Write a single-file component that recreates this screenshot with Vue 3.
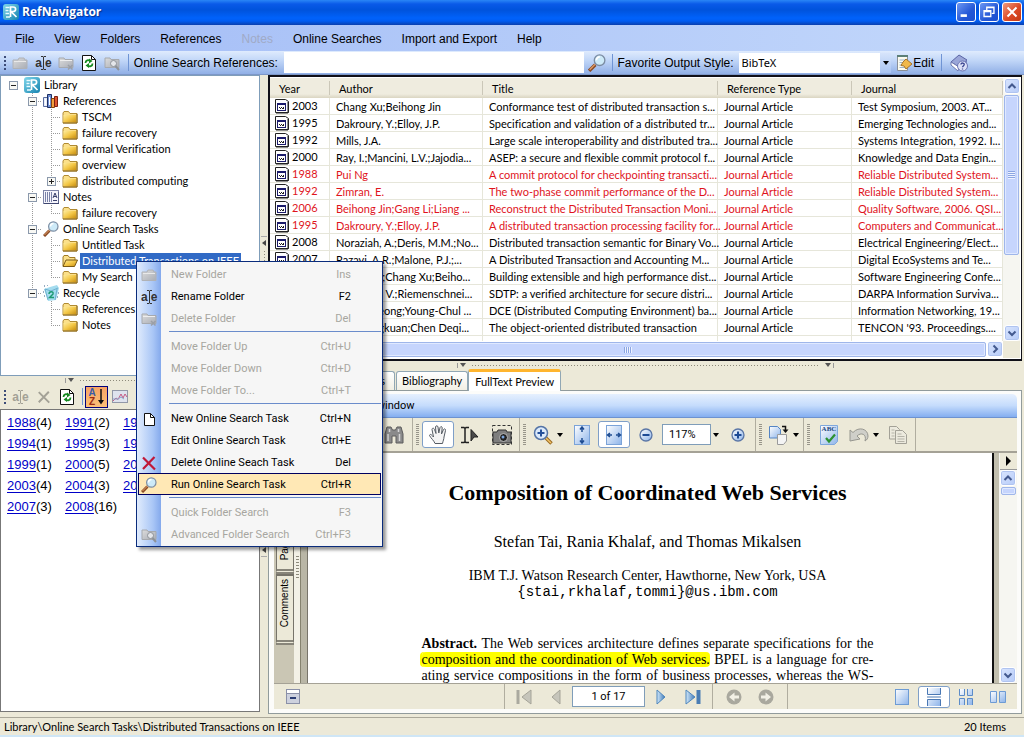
<script setup>
import { ref } from 'vue'

const menus = [
  { label: 'File' }, { label: 'View' }, { label: 'Folders' }, { label: 'References' },
  { label: 'Notes', off: true }, { label: 'Online Searches' }, { label: 'Import and Export' }, { label: 'Help' }
]

const query = ref('')
const style = ref('BibTeX')
const zoom = ref('117%')
const page = ref('1 of 17')

// cells: '' blank, 'v' vertical line, 't' tee, 'l' corner; box: expander sign
const tree = [
  { cells: [''], box: '−', icon: 'logo', label: 'Library' },
  { cells: ['', 't'], box: '−', icon: 'books', label: 'References' },
  { cells: ['', 'v', 't'], icon: 'folder', label: 'TSCM' },
  { cells: ['', 'v', 't'], icon: 'folder', label: 'failure recovery' },
  { cells: ['', 'v', 't'], icon: 'folder', label: 'formal Verification' },
  { cells: ['', 'v', 't'], icon: 'folder', label: 'overview' },
  { cells: ['', 'v', 'l'], box: '+', icon: 'folder', label: 'distributed computing' },
  { cells: ['', 't'], box: '−', icon: 'notes', label: 'Notes' },
  { cells: ['', 'v', 'l'], icon: 'folder', label: 'failure recovery' },
  { cells: ['', 't'], box: '−', icon: 'lens', label: 'Online Search Tasks' },
  { cells: ['', 'v', 't'], icon: 'folder', label: 'Untitled Task' },
  { cells: ['', 'v', 't'], icon: 'folder-open', label: 'Distributed Transactions on IEEE', on: true },
  { cells: ['', 'v', 'l'], icon: 'folder', label: 'My Search' },
  { cells: ['', 'l'], box: '−', icon: 'recycle', label: 'Recycle' },
  { cells: ['', '', 't'], icon: 'folder', label: 'References' },
  { cells: ['', '', 'l'], icon: 'folder', label: 'Notes' }
]

const years = [
  ['1988', 4], ['1991', 2], ['1992', 4],
  ['1994', 1], ['1995', 3], ['1996', 2],
  ['1999', 1], ['2000', 5], ['2001', 2],
  ['2003', 4], ['2004', 3], ['2005', 5],
  ['2007', 3], ['2008', 16]
]

const rows = [
  ['2003', 'Chang Xu;Beihong Jin', 'Conformance test of distributed transaction s...', 'Test Symposium, 2003. AT...'],
  ['1995', 'Dakroury, Y.;Elloy, J.P.', 'Specification and validation of a distributed tr...', 'Emerging Technologies and...'],
  ['1992', 'Mills, J.A.', 'Large scale interoperability and distributed tra...', 'Systems Integration, 1992. I...'],
  ['2000', 'Ray, I.;Mancini, L.V.;Jajodia...', 'ASEP: a secure and flexible commit protocol f...', 'Knowledge and Data Engin...'],
  ['1988', 'Pui Ng', 'A commit protocol for checkpointing transacti...', 'Reliable Distributed System...', true],
  ['1992', 'Zimran, E.', 'The two-phase commit performance of the D...', 'Reliable Distributed System...', true],
  ['2006', 'Beihong Jin;Gang Li;Liang ...', 'Reconstruct the Distributed Transaction Moni...', 'Quality Software, 2006. QSI...', true],
  ['1995', 'Dakroury, Y.;Elloy, J.P.', 'A distributed transaction processing facility for...', 'Computers and Communicat...', true],
  ['2008', 'Noraziah, A.;Deris, M.M.;No...', 'Distributed transaction semantic for Binary Vo...', 'Electrical Engineering/Elect...'],
  ['2007', 'Razavi, A.R.;Malone, P.J.;...', 'A Distributed Transaction and Accounting M...', 'Digital EcoSystems and Te...'],
  ['2003', 'Wei Zhan;Chang Xu;Beiho...', 'Building extensible and high performance dist...', 'Software Engineering Confe...'],
  ['2000', 'Gilham, F. V.;Riemenschnei...', 'SDTP: a verified architecture for secure distri...', 'DARPA Information Surviva...'],
  ['1998', 'Eun-Mi Jeong;Young-Chul ...', 'DCE (Distributed Computing Environment) ba...', 'Information Networking, 19...'],
  ['1993', 'Zhou Lingkuan;Chen Deqi...', 'The object-oriented distributed transaction', "TENCON '93. Proceedings...."]
]

const contextMenu = [
  { label: 'New Folder', key: 'Ins', off: true, icon: 'folder-off' },
  { label: 'Rename Folder', key: 'F2', icon: 'rename' },
  { label: 'Delete Folder', key: 'Del', off: true, icon: 'folder-del' },
  null,
  { label: 'Move Folder Up', key: 'Ctrl+U', off: true },
  { label: 'Move Folder Down', key: 'Ctrl+D', off: true },
  { label: 'Move Folder To...', key: 'Ctrl+T', off: true },
  null,
  { label: 'New Online Search Task', key: 'Ctrl+N', icon: 'sheet' },
  { label: 'Edit Online Search Task', key: 'Ctrl+E' },
  { label: 'Delete Online Seach Task', key: 'Del', icon: 'cross' },
  { label: 'Run Online Search Task', key: 'Ctrl+R', icon: 'lens', on: true },
  null,
  { label: 'Quick Folder Search', key: 'F3', off: true },
  { label: 'Advanced Folder Search', key: 'Ctrl+F3', off: true, icon: 'folder-find' }
]
</script>

<template>
  <div class="app">
    <svg class="defs" aria-hidden="true">
      <defs>
        <linearGradient id="gFolder" x1="0" y1="0" x2="1" y2="1"><stop offset="0" stop-color="#fdeb9c" /><stop offset=".5" stop-color="#f3c747" /><stop offset="1" stop-color="#c68d10" /></linearGradient>
        <linearGradient id="gGrey" x1="0" y1="0" x2="1" y2="1"><stop offset="0" stop-color="#dcdcdc" /><stop offset="1" stop-color="#a9adb5" /></linearGradient>
        <linearGradient id="gBlue" x1="0" y1="0" x2="1" y2="1"><stop offset="0" stop-color="#ffffff" /><stop offset="1" stop-color="#8db4ea" /></linearGradient>
        <linearGradient id="gNav" x1="0" y1="0" x2="1" y2="0"><stop offset="0" stop-color="#d3e9fa" /><stop offset="1" stop-color="#3c78b8" /></linearGradient>
        <linearGradient id="gLogo" x1="0" y1="0" x2="1" y2="1"><stop offset="0" stop-color="#7fd6ea" /><stop offset="1" stop-color="#1583b0" /></linearGradient>
      </defs>
      <symbol id="logo" viewBox="0 0 16 16"><rect width="16" height="16" rx="3" fill="url(#gLogo)" /><path d="M2.500 3.500h4M2.500 6.500h3M2.500 9.500h3.500M3 13h4" fill="none" stroke="#e9fbff" stroke-width="1.300" /><path d="M7.500 13V3H10c3.500 0 3.500 4.500 0 4.500H8l5.500 5.500" fill="none" stroke="#fff" stroke-width="1.700" /></symbol>
      <symbol id="folder" viewBox="0 0 16 16"><path d="M1 13V4l1-1.500h4.500L8 4.500h7V14H1z" fill="#fbe08a" stroke="#b08a32" /><path d="M1.500 6H14v7.500H1.500z" fill="url(#gFolder)" /><path d="M1 14h14V5" fill="none" stroke="#8a6820" /></symbol>
      <symbol id="folder-open" viewBox="0 0 16 16"><path d="M1 13V4l1-1.500h4L7.500 4.500H13V7" fill="#fbe08a" stroke="#a07a22" /><path d="M1 13.500 4 7h11.500l-3 6.500z" fill="url(#gFolder)" stroke="#7b5a14" /></symbol>
      <symbol id="folder-off" viewBox="0 0 16 16"><path d="M1 13.500V5h5l1-2h5l1 2h2v8.500z" fill="url(#gGrey)" stroke="#b0b2b6" /><path d="M2 6.500h12" stroke="#e9e9e9" /></symbol>
      <symbol id="folder-del" viewBox="0 0 16 16"><path d="M1 12.500V3h5l1 1.500h8v8z" fill="url(#gGrey)" stroke="#a6a9ae" /><path d="M2 5.500h12" stroke="#eee" /><path d="m10 10 4.500 4.500m0-4.500L10 14.500" stroke="#9b9fa6" stroke-width="1.500" /></symbol>
      <symbol id="folder-find" viewBox="0 0 16 16"><path d="M1 12.500V3h5l1 1.500h8v8z" fill="url(#gGrey)" stroke="#a6a9ae" /><circle cx="9.500" cy="8.500" r="3" fill="#e4e6ea" stroke="#8e9298" /><path d="m11.500 11 3.500 4" stroke="#8e9298" stroke-width="2" /></symbol>
      <symbol id="refresh" viewBox="0 0 16 16"><path d="M1.500.5h9l4 4v11h-13z" fill="#fff" stroke="#111" /><path d="M10.500.5v4h4" fill="none" stroke="#111" /><path d="M4.500 8c0-3 3-3.500 4.500-2M11.500 8.500c0 3-3 3.500-4.500 2" fill="none" stroke="#158a20" stroke-width="1.800" /><path d="M8 3.500 11.500 6 8 8.500zM8 8l-3.500 2.500L8 13z" fill="#158a20" /></symbol>
      <symbol id="lens" viewBox="0 0 16 16"><path d="m1 15 5.500-5.500" stroke="#8a4b25" stroke-width="3" /><path d="m1.500 14 5-5" stroke="#e6a06a" stroke-width="1" /><circle cx="10.300" cy="5.500" r="4.700" fill="#cdeaf8" stroke="#7c8da3" stroke-width="1.200" /><path d="M7.500 5.500A3 3 0 0 1 10.500 2.500" stroke="#fff" stroke-width="1.500" fill="none" /></symbol>
      <symbol id="books" viewBox="0 0 16 16"><path d="M.5 4.500h4v9h-4z" fill="#e8edf8" stroke="#5a6da0" /><path d="M4.500 1.500h4v13h-4z" fill="#6f8fd4" stroke="#1d2f63" /><path d="M8.500 5.500h3v9h-3z" fill="#f0a040" stroke="#84430e" /><path d="M11.500 3.500h3v10h-3z" fill="#e0552e" stroke="#7f2010" /><path d="M2.500 6v6M6.500 4v8" stroke="#fff" /></symbol>
      <symbol id="notes" viewBox="0 0 16 16"><rect x=".5" y="1.500" width="15" height="13" fill="#f4f4fb" stroke="#7d84a8" /><path d="M2.500 3v10M4.500 3v10M6.500 3v10M8.500 3v10" stroke="#7a82a8" /><path d="m10 9 2-5 2 5M10.500 7.500h3M10 11.500h4" stroke="#39406b" fill="none" /><path d="M1 14.500h15V3" stroke="#3e4670" fill="none" /></symbol>
      <symbol id="recycle" viewBox="0 0 16 16"><path d="m1 4 6-2 7-2 2 3-3 12-8 1z" fill="#a4dcef" /><path d="m2 4 3 11M14 4l-2 11M2 4l6 2 7-3" stroke="#6fb0cf" fill="none" /><path d="M6 9c0-3 5-3 4 0L6.500 12.500H11" fill="none" stroke="#1d9a72" stroke-width="1.400" /><path d="M1 1h1M4 0h1M0 7h1M1 11h1M14 12h1M15 8h1" stroke="#2f5a86" /></symbol>
      <symbol id="sheet" viewBox="0 0 16 16"><path d="M3.500 2.500h6l4 4v8h-10z" fill="#fff" stroke="#111" /><path d="M9.500 2.500v4h4" fill="none" stroke="#111" /></symbol>
      <symbol id="cross" viewBox="0 0 16 16"><path d="m2 2.500 12 12M13.500 2 2 14" stroke="currentColor" stroke-width="2.200" fill="none" /></symbol>
      <symbol id="beam" viewBox="0 0 5 16"><path d="M0 1.500h2l.5.500.5-.5h2M2.500 2v12M0 14.500h2l.5-.5.5.500h2" fill="none" stroke="currentColor" /></symbol>
      <symbol id="down" viewBox="0 0 8 18"><path d="M4 1v13" stroke="#111" stroke-width="1.500" /><path d="M1 12h6L4 16.500z" fill="#111" /></symbol>
      <symbol id="chart" viewBox="0 0 16 14"><rect x=".5" y=".5" width="15" height="12" fill="#dfe3ee" stroke="#9298a8" /><path d="M1 11l3-3 2 1.500L9 4l2 4 2-4 2 3" stroke="#c55a82" fill="none" /><path d="M1 9h5l3-2 3 2" stroke="#8aa5cb" fill="none" /></symbol>
      <symbol id="record" viewBox="0 0 14 16"><path d="M.5 1.500h10l3 2v11H.5z" fill="#fff" stroke="#222" /><path d="M13 4v11H1" fill="none" stroke="#222" /><rect x="2.500" y="5.500" width="8" height="7" fill="#fff" stroke="#1b1b6b" /><path d="M2 6h9" stroke="#1b1b6b" stroke-width="2" /><path d="M4 9.500h1M6 9.500h1M8 9.500h1M5 10.500h1M7 10.500h2" stroke="#222" /></symbol>
      <symbol id="edit" viewBox="0 0 18 18"><path d="M2.500 2.500h10v14h-10z" fill="#fbfbef" stroke="#8b9097" /><path d="M2 1h11v2H2z" fill="#5c7f77" /><path d="M4.500 6h6M4.500 8.500h5M4.500 11h4M4.500 13.500h6" stroke="#9fb3c9" /><path d="m11 5 6 5-6 5-2-3-3-.5 2-3.500z" fill="#f0b84a" stroke="#a8762a" /></symbol>
      <symbol id="help" viewBox="0 0 18 18"><path d="M1 8 9 1l8 5-8 7z" fill="#9aa6d8" stroke="#5a64a4" /><path d="M1 8v3l7 6 1-4z" fill="#fff" stroke="#6e78b0" /><path d="M9 13v3l8-6V6z" fill="#7480bd" /><circle cx="12.500" cy="12" r="5" fill="#dbe0f7" stroke="#6c76b4" /><path d="M11 10.500c0-2 3.500-2 3.200.2C14 12 12.500 12 12.500 13.300M12.500 14.500v1" stroke="#38438f" stroke-width="1.300" fill="none" /></symbol>
      <symbol id="binoculars" viewBox="0 0 20 20"><path d="M1 18V9l2-7h4l1.500 3h3L13 2h4l2 7v9h-7v-7H8v7z" fill="#8a8a8a" stroke="#5c5c5c" /><path d="M4 9v7M15.500 9v7M5.500 4v3M14.500 4v3" stroke="#d5d5d5" stroke-width="1.500" /></symbol>
      <symbol id="hand" viewBox="0 0 20 20"><path d="M7 18.500c-1-3-4-5-5.500-8 .5-2 2-1 4 1.500L4 4.500c.3-2 2-1.500 2.500 0L8 8.500 7.500 2c.5-1.800 2.200-1.500 2.500 0l.8 6L12 2.500c.8-1.500 2.300-1 2.200.5L13.500 9l2-4.500c1-1.300 2.300-.5 2 1L16 12c0 2-1 4-1.500 6.500z" fill="#f4f4f4" stroke="#555b63" /></symbol>
      <symbol id="select-text" viewBox="0 0 20 20"><path d="M1 2.500h3l1 1 1-1h3M5 3v14M1 17.500h3l1-1 1 1h3" fill="none" stroke="#222" stroke-width="1.500" /><path d="M11 4.500 18 12h-4l-3 4z" fill="#4a4a4a" stroke="#222" /></symbol>
      <symbol id="camera" viewBox="0 0 20 20"><rect x=".5" y=".5" width="19" height="19" fill="none" stroke="#333" stroke-dasharray="3 2" /><path d="M1 7h4l1-2h8l1 2h4v11H1z" fill="#7e7e7e" stroke="#333" /><circle cx="11.500" cy="12.500" r="4" fill="#222" stroke="#bbb" /><circle cx="11" cy="12" r="1.500" fill="#7aa5dd" /></symbol>
      <symbol id="zoom-in" viewBox="0 0 20 20"><path d="m12.500 12.500 6 6" stroke="#9a6a20" stroke-width="3.500" /><path d="m12 12 6 6" stroke="#f2c46a" stroke-width="1.500" /><circle cx="8" cy="8" r="6.500" fill="#dceafa" stroke="#5474a6" stroke-width="1.500" /><path d="M8 4.500v7M4.500 8h7" stroke="#24509a" stroke-width="2" /></symbol>
      <symbol id="fit-height" viewBox="0 0 16 20"><rect x=".5" y=".5" width="15" height="19" fill="url(#gBlue)" stroke="#7ba3d8" /><path d="M8 2v5M8 13v5M6 4.500 8 2l2 2.500M6 15.500 8 18l2-2.500" fill="none" stroke="#1e4c91" stroke-width="1.500" /></symbol>
      <symbol id="fit-width" viewBox="0 0 16 20"><rect x=".5" y=".5" width="15" height="19" fill="url(#gBlue)" stroke="#7ba3d8" /><path d="M1.500 10H6M10 10h4.500M4 8l-2.500 2L4 12M12 8l2.500 2L12 12" fill="none" stroke="#1e4c91" stroke-width="1.500" /></symbol>
      <symbol id="minus" viewBox="0 0 14 14"><circle cx="7" cy="7" r="6" fill="url(#gBlue)" stroke="#5a76a6" stroke-width="1.300" /><path d="M3.500 7h7" stroke="#1c4a95" stroke-width="2" /></symbol>
      <symbol id="plus" viewBox="0 0 14 14"><circle cx="7" cy="7" r="6" fill="url(#gBlue)" stroke="#5a76a6" stroke-width="1.300" /><path d="M3.500 7h7M7 3.500v7" stroke="#1c4a95" stroke-width="2" /></symbol>
      <symbol id="rotate" viewBox="0 0 20 20"><path d="M.5 1.500h8l3 3V13H.5z" fill="url(#gBlue)" stroke="#5585c4" /><path d="M8.500 9.500h9V16l-3 3.500h-6z" fill="#f4f4f4" stroke="#9a9a9a" /><path d="M13 1.500h3.500V5" fill="none" stroke="#111" stroke-width="1.500" /><path d="M13.500 4.500h6l-3 3.500z" fill="#111" /></symbol>
      <symbol id="spell" viewBox="0 0 18 20"><path d="M.5.500h17v16l-3 3H.5z" fill="url(#gBlue)" stroke="#7fa8dc" /><path d="m6 13 3 3.500 6-7" fill="none" stroke="#2c9132" stroke-width="2.200" /></symbol>
      <symbol id="undo" viewBox="0 0 20 16"><path d="M1 14V3l3 2.500C10-1 19 2 19 9c0 2-1 4-3 5 2-7-4-9-8-5l3 3z" fill="#cfcfc9" stroke="#96968f" /></symbol>
      <symbol id="copy" viewBox="0 0 18 18"><path d="M.5.500h7l3 3V13H.5z" fill="#eceade" stroke="#a3a197" /><path d="M6.500 4.500h7l4 4v9h-11z" fill="#eceade" stroke="#a3a197" /><path d="M8.500 8h4M8.500 10.500h7M8.500 13h7M8.500 15.500h7M2.500 4h3M2.500 7h3M2.500 10h3" stroke="#b5b3a8" /></symbol>
      <symbol id="first" viewBox="0 0 16 16"><path d="M.5 1h3v14h-3z" fill="#aaa99f" /><path d="M15 1v14L6 8z" fill="#c6c5bb" stroke="#a5a498" /></symbol>
      <symbol id="prev" viewBox="0 0 10 16"><path d="M9 1v14L1 8z" fill="#c6c5bb" stroke="#a5a498" /></symbol>
      <symbol id="next" viewBox="0 0 10 16"><path d="M1 1v14l8-7z" fill="url(#gNav)" stroke="#4e86bd" /></symbol>
      <symbol id="last" viewBox="0 0 16 16"><path d="M1 1v14l9-7z" fill="url(#gNav)" stroke="#4e86bd" /><path d="M11.500 1h4v14h-4z" fill="#4a7db4" /></symbol>
      <symbol id="back" viewBox="0 0 16 16"><circle cx="8" cy="8" r="7.500" fill="#a9a89e" /><path d="M13 6.500H8.500V3.500L3 8l5.500 4.500v-3H13z" fill="#f2f0e6" /></symbol>
      <symbol id="one" viewBox="0 0 14 16"><rect x=".5" y=".5" width="13" height="15" fill="url(#gBlue)" stroke="#6d9bd4" /></symbol>
      <symbol id="cont" viewBox="0 0 14 18"><path d="M.5 0v6.500h13V0M.5 18v-6.500h13V18" fill="url(#gBlue)" stroke="#4a78b4" /><path d="M0 9h14" stroke="#4a78b4" /></symbol>
      <symbol id="grid" viewBox="0 0 14 16"><path d="M.5 0v6.500h5V0M8.500 0v6.500h5V0M.5 16V9.500h5V16M8.500 16V9.500h5V16" fill="url(#gBlue)" stroke="#5c8cc8" /></symbol>
      <symbol id="two" viewBox="0 0 16 12"><path d="M.5.500h6v11h-6zM9.500.500h6v11h-6z" fill="url(#gBlue)" stroke="#6d9bd4" /></symbol>
      <symbol id="collapse" viewBox="0 0 14 15"><rect x=".5" y=".5" width="13" height="14" fill="#fff" stroke="#8a90a8" /><path d="M1 5h12v9H1z" fill="#cdd1de" /><path d="M4 9h6" stroke="#2c3e74" stroke-width="2" /><path d="M1 4.500h12" stroke="#8a90a8" /></symbol>
      <symbol id="chev-up" viewBox="0 0 10 10"><path d="M1.500 7 5 3.500 8.500 7" fill="none" stroke="#43598e" stroke-width="2" /></symbol>
      <symbol id="chev-down" viewBox="0 0 10 10"><path d="M1.500 3.500 5 7l3.500-3.500" fill="none" stroke="#43598e" stroke-width="2" /></symbol>
      <symbol id="chev-right" viewBox="0 0 10 10"><path d="M3.500 1.500 7 5 3.500 8.500" fill="none" stroke="#43598e" stroke-width="2" /></symbol>
      <symbol id="caret" viewBox="0 0 6 4"><path d="M0 0h6L3 4z" fill="currentColor" /></symbol>
    </svg>

    <header class="titlebar">
      <svg class="i16"><use href="#logo" /></svg>
      <h1>RefNavigator</h1>
      <button class="win" aria-label="Minimize"><svg viewBox="0 0 20 20"><path d="M4 14h7" stroke="#fff" stroke-width="3" /></svg></button>
      <button class="win" aria-label="Restore"><svg viewBox="0 0 20 20"><path d="M7.500 8V4.500h8v7H13M7 5h9" fill="none" stroke="#fff" stroke-width="1.500" /><path d="M4.500 8.500h7.500v6.500H4.500zM4 9.500h8" fill="none" stroke="#fff" stroke-width="1.500" /></svg></button>
      <button class="win close" aria-label="Close"><svg viewBox="0 0 20 20"><path d="m5 5 10 10M15 5 5 15" stroke="#fff" stroke-width="2.200" /></svg></button>
    </header>

    <nav class="menubar">
      <button v-for="m in menus" :key="m.label" :disabled="m.off">{{ m.label }}</button>
    </nav>

    <div class="toolbar">
      <span class="grip"></span>
      <button class="tool" disabled aria-label="New folder"><svg class="i16"><use href="#folder-off" /></svg></button>
      <button class="tool rename" aria-label="Rename">a<svg class="beam"><use href="#beam" /></svg>e</button>
      <button class="tool" disabled aria-label="Delete folder"><svg class="i16"><use href="#folder-del" /></svg></button>
      <button class="tool" aria-label="Refresh"><svg class="i16"><use href="#refresh" /></svg></button>
      <button class="tool" disabled aria-label="Find folder"><svg class="i16"><use href="#folder-find" /></svg></button>
      <span class="vsep"></span>
      <label for="query">Online Search References:</label>
      <input id="query" v-model="query" type="text" />
      <button class="go" aria-label="Search"><svg class="i18"><use href="#lens" /></svg></button>
      <span class="vsep"></span>
      <label for="style" class="style-label">Favorite Output Style:</label>
      <span class="combo">
        <select id="style" v-model="style"><option>BibTeX</option></select>
        <span class="drop"><svg class="caret"><use href="#caret" /></svg></span>
      </span>
      <button class="edit"><svg class="i18"><use href="#edit" /></svg>Edit</button>
      <span class="vsep"></span>
      <button class="tool" aria-label="Help"><svg class="i18"><use href="#help" /></svg></button>
    </div>

    <main class="main">
      <aside class="left">
        <section class="tree">
          <div v-for="(n, i) in tree" :key="i" class="node">
            <span v-for="(c, j) in n.cells" :key="j" class="cell" :class="c && 'c-' + c">
              <button v-if="n.box && j === n.cells.length - 1" class="box" :class="{ shut: n.box === '+' }" :aria-label="n.label"></button>
            </span>
            <svg class="i16"><use :href="'#' + n.icon" /></svg>
            <span class="name" :class="{ on: n.on }">{{ n.label }}</span>
          </div>
        </section>
        <div class="hsplit"><span class="handle"><svg class="caret"><use href="#caret" /></svg><i></i></span></div>
        <div class="yearbar">
          <span class="grip"></span>
          <button class="tool rename" disabled aria-label="Rename">a<svg class="beam"><use href="#beam" /></svg>e</button>
          <button class="tool grey" disabled aria-label="Delete"><svg class="i14"><use href="#cross" /></svg></button>
          <button class="tool" aria-label="Refresh"><svg class="i16"><use href="#refresh" /></svg></button>
          <span class="vsep"></span>
          <button class="sort" aria-label="Sort"><span class="az"><span>A</span><span>Z</span></span><svg class="down"><use href="#down" /></svg></button>
          <button class="tool" aria-label="Chart"><svg class="i16"><use href="#chart" /></svg></button>
        </div>
        <section class="years">
          <span v-for="y in years" :key="y[0]"><a href="#">{{ y[0] }}</a>({{ y[1] }})</span>
        </section>
      </aside>

      <div class="vsplit"><span class="handle"><b class="tri"></b><i></i><b class="tri"></b></span></div>

      <div class="right">
        <section class="refs">
          <div class="refs-body">
            <div class="grid-wrap">
              <table>
                <colgroup><col class="w-year" /><col class="w-author" /><col class="w-title" /><col class="w-type" /><col /></colgroup>
                <thead><tr><th>Year</th><th>Author</th><th>Title</th><th>Reference Type</th><th>Journal</th></tr></thead>
                <tbody>
                  <tr v-for="(r, i) in rows" :key="i" :class="{ red: r[4] }">
                    <td class="first"><span class="yr"><svg class="rec"><use href="#record" /></svg>{{ r[0] }}</span></td><td>{{ r[1] }}</td><td>{{ r[2] }}</td><td>Journal Article</td><td>{{ r[3] }}</td>
                  </tr>
                  <tr class="rest"><td></td><td></td><td></td><td></td><td></td></tr>
                </tbody>
              </table>
            </div>
            <div class="vbar">
              <button class="sb" aria-label="Scroll up"><svg class="i10"><use href="#chev-up" /></svg></button>
              <div class="thumb tall"><i></i></div>
              <button class="sb end" aria-label="Scroll down"><svg class="i10"><use href="#chev-down" /></svg></button>
            </div>
          </div>
          <div class="hbar">
            <div class="thumb wide"><i></i></div>
            <button class="sb" aria-label="Scroll right"><svg class="i10"><use href="#chev-right" /></svg></button>
            <span class="corner"></span>
          </div>
        </section>

        <div class="hsplit"><span class="handle"><svg class="caret"><use href="#caret" /></svg><i></i><svg class="caret"><use href="#caret" /></svg></span></div>

        <div class="tabs">
          <button class="t-first">Notes</button><button>Bibliography</button><button class="active">FullText Preview</button>
        </div>

        <section class="viewer">
          <div class="banner">Open in new window</div>
          <div class="pdfbar">
            <div class="seg s-find"><svg class="i20"><use href="#binoculars" /></svg></div>
            <div class="seg">
              <span class="dots"></span>
              <button class="pt pressed" aria-label="Hand"><svg class="i20"><use href="#hand" /></svg></button>
              <button class="pt" aria-label="Select text"><svg class="i20"><use href="#select-text" /></svg></button>
              <button class="pt" aria-label="Snapshot"><svg class="i20"><use href="#camera" /></svg></button>
            </div>
            <div class="seg">
              <span class="dots"></span>
              <button class="pt narrow" aria-label="Zoom in tool"><svg class="i20"><use href="#zoom-in" /></svg><svg class="caret"><use href="#caret" /></svg></button>
              <button class="pt" aria-label="Fit page"><svg class="fit"><use href="#fit-height" /></svg></button>
              <button class="pt pressed" aria-label="Fit width"><svg class="fit"><use href="#fit-width" /></svg></button>
              <button class="pt" aria-label="Zoom out"><svg class="i14"><use href="#minus" /></svg></button>
              <input v-model="zoom" class="zoom" aria-label="Zoom" /><svg class="caret zc"><use href="#caret" /></svg>
              <button class="pt" aria-label="Zoom in"><svg class="i14"><use href="#plus" /></svg></button>
            </div>
            <div class="seg">
              <span class="dots"></span>
              <button class="pt narrow" aria-label="Rotate"><svg class="i20"><use href="#rotate" /></svg><svg class="caret"><use href="#caret" /></svg></button>
            </div>
            <div class="seg">
              <span class="dots"></span>
              <button class="pt spellbtn" aria-label="Spell check"><svg class="spell"><use href="#spell" /></svg><span class="abc">ABC</span></button>
              <button class="pt narrow" aria-label="Undo"><svg class="i20"><use href="#undo" /></svg><svg class="caret"><use href="#caret" /></svg></button>
              <button class="pt" aria-label="Copy"><svg class="i18"><use href="#copy" /></svg></button>
            </div>
          </div>
          <div class="reader">
            <div class="side">
              <button class="stab short"><span>Pages</span></button>
              <button class="stab"><span>Comments</span></button>
            </div>
            <div class="sidesplit"><i></i></div>
            <div class="gutter"></div>
            <article class="page">
              <h2>Composition of Coordinated Web Services</h2>
              <p class="authors">Stefan Tai, Rania Khalaf, and Thomas Mikalsen</p>
              <p class="place">IBM T.J. Watson Research Center, Hawthorne, New York, USA</p>
              <p class="mail">{stai,rkhalaf,tommi}@us.ibm.com</p>
              <div class="abstract">
                <p><strong>Abstract.</strong> The Web services architecture defines separate specifications for the</p>
                <p><mark>composition and the coordination of Web services.</mark> BPEL is a language for cre-</p>
                <p>ating service compositions in the form of business processes, whereas the WS-</p>
              </div>
            </article>
            <div class="gutter thin"></div>
            <div class="vbar pv">
              <button class="pop" aria-label="Expand"><b></b></button>
              <button class="sb" aria-label="Scroll up"><svg class="i10"><use href="#chev-up" /></svg></button>
              <div class="thumb tiny"></div>
              <button class="sb end" aria-label="Scroll down"><svg class="i10"><use href="#chev-down" /></svg></button>
            </div>
          </div>
          <div class="pagebar">
            <button class="nb lead" aria-label="Collapse"><svg class="coll"><use href="#collapse" /></svg></button>
            <div class="pager">
              <button class="nb" aria-label="First page"><svg class="i16"><use href="#first" /></svg></button>
              <button class="nb" aria-label="Previous page"><svg class="arr"><use href="#prev" /></svg></button>
              <input v-model="page" class="pageno" aria-label="Page" />
              <button class="nb" aria-label="Next page"><svg class="arr"><use href="#next" /></svg></button>
              <button class="nb" aria-label="Last page"><svg class="i16"><use href="#last" /></svg></button>
            </div>
            <div class="hist">
              <button class="nb" aria-label="Previous view"><svg class="i16"><use href="#back" /></svg></button>
              <button class="nb" aria-label="Next view"><svg class="i16 flip"><use href="#back" /></svg></button>
            </div>
            <div class="modes">
              <button class="nb" aria-label="Single page"><svg class="m1"><use href="#one" /></svg></button>
              <button class="nb pressed" aria-label="Continuous"><svg class="m2"><use href="#cont" /></svg></button>
              <button class="nb" aria-label="Continuous facing"><svg class="m1"><use href="#grid" /></svg></button>
              <button class="nb" aria-label="Facing"><svg class="m3"><use href="#two" /></svg></button>
            </div>
          </div>
        </section>
      </div>
    </main>

    <footer class="status"><span>Library\Online Search Tasks\Distributed Transactions on IEEE</span><span>20 Items</span></footer>

    <div class="popup" role="menu">
      <template v-for="(m, i) in contextMenu" :key="i">
        <hr v-if="!m" />
        <button v-else role="menuitem" :disabled="m.off" :class="{ on: m.on }">
          <span class="ic">
            <span v-if="m.icon === 'rename'" class="rename">a<svg class="beam"><use href="#beam" /></svg>e</span>
            <svg v-else-if="m.icon" class="i16" :class="m.icon"><use :href="'#' + m.icon" /></svg>
          </span>
          <span class="lb">{{ m.label }}</span><span class="ky">{{ m.key }}</span>
        </button>
      </template>
    </div>
  </div>
</template>

<style>
body { margin: 0; overflow: hidden; }
</style>

<style scoped>
* { box-sizing: border-box; }
.app { position: relative; height: 100vh; display: flex; flex-direction: column; background: #ece9d8; color: #000; font: 11px/16px Roboto, "Liberation Sans", Arial, sans-serif; font-variant-ligatures: none; overflow: hidden; }
button { font: inherit; color: inherit; background: none; border: 0; padding: 0; margin: 0; }
button, label, span { white-space: nowrap; }
input, select { font: inherit; color: inherit; border: 0; margin: 0; padding: 0; outline: 0; border-radius: 0; }
svg { display: block; flex: none; }
.defs { position: absolute; width: 0; height: 0; }
.i10 { width: 10px; height: 10px; }
.i14 { width: 14px; height: 14px; }
.i16 { width: 16px; height: 16px; }
.i18 { width: 18px; height: 18px; }
.i20 { width: 20px; height: 20px; }
.caret { width: 6px; height: 4px; }
.beam { width: 5px; height: 16px; margin: 0 -1px; }
.rename { display: flex; align-items: center; font: bold 12px/14px "Liberation Sans", sans-serif; color: #333; }
.rename:disabled { color: #a3a196; }

.titlebar { flex: none; height: 25px; display: flex; align-items: center; gap: 3px; padding: 0 2px 2px 3px; background: linear-gradient(#2a86f6 0, #0a5ae8 4px, #0053dc 10px, #0062fb 18px, #005cf2 21px, #0a3fae 25px); }
.titlebar h1 { flex: 1; margin: 0; font: bold 12px/20px "Open Sans", "Noto Sans", sans-serif; color: #fff; text-shadow: 1px 1px 1px #0a2f8c; }
.win { width: 20px; height: 20px; border: 1px solid #fff; border-radius: 3px; background: linear-gradient(135deg, #6d98f3, #2457d6 60%, #1c4fd0); }
.win.close { background: linear-gradient(135deg, #f09a7e, #dc4a26 55%, #c33a14); }
.win svg { width: 18px; height: 18px; }

.menubar, .toolbar { font-family: "Liberation Sans", Arial, sans-serif; font-size: 12px; }
.menubar { flex: none; height: 26px; display: flex; align-items: center; padding: 2px 0 0 15px; gap: 20px; background: linear-gradient(90deg, #a3bcf6, #c3d8fb); }
.menubar button:disabled { color: #a0aac6; }

.toolbar { flex: none; height: 24px; display: flex; align-items: center; background: linear-gradient(#dfebfd, #c2d7f8 40%, #90afe6); border-bottom: 1px solid #7d97c8; padding-left: 4px; }
.grip { width: 2px; height: 14px; margin-right: 3px; background: repeating-linear-gradient(#3c4c78 0 2px, transparent 2px 4px); }
.tool { width: 23px; display: flex; justify-content: center; }
.vsep { width: 1px; height: 17px; background: #6f94d4; margin: 0 5px 0 4px; }
.toolbar input { flex: 1 1 300px; min-width: 60px; height: 21px; margin-left: 6px; background: #fff; }
.go { margin: 0 2px 0 4px; }
.style-label { margin-right: 5px; }
.combo { display: grid; width: 153px; height: 20px; }
.combo > * { grid-area: 1 / 1; }
.combo select { appearance: none; background: #fff; padding-left: 3px; width: 100%; font: 11px "Noto Sans", sans-serif; }
.drop { justify-self: end; width: 11px; display: flex; align-items: center; justify-content: center; background: linear-gradient(#d6e4fb, #a9c4f2); pointer-events: none; }
.edit { display: flex; align-items: center; margin: 0 3px 0 4px; }
.toolbar .tool:last-child { margin-right: 54px; }

.main { flex: 1; min-height: 0; display: flex; }
.left { width: 260px; flex: none; display: flex; flex-direction: column; }
.tree, .refs, .status, .tabs { font-family: Lato, "Liberation Sans", sans-serif; }
.tree { flex: none; height: 301px; border: 1px solid #7f9db9; background: #fff; padding: 1px 0 0 3px; }
.node { display: flex; align-items: center; height: 16px; }
.cell { width: 19px; height: 16px; flex: none; display: flex; align-items: center; justify-content: center; --v: repeating-linear-gradient(#999 0 1px, transparent 1px 2px); --h: repeating-linear-gradient(90deg, #999 0 1px, transparent 1px 2px); background-repeat: no-repeat; }
.c-v { background-image: var(--v); background-size: 1px 16px; background-position: 9px 0; }
.c-t { background-image: var(--v), var(--h); background-size: 1px 16px, 10px 1px; background-position: 9px 0, 9px 8px; }
.c-l { background-image: var(--v), var(--h); background-size: 1px 8px, 10px 1px; background-position: 9px 0, 9px 8px; }
.box { width: 9px; height: 9px; border: 1px solid #8b99ac; background: linear-gradient(#222, #222) 1px 3px / 5px 1px no-repeat #f8f8f4; }
.box.shut { background: linear-gradient(#222, #222) 1px 3px / 5px 1px no-repeat, linear-gradient(#222, #222) 3px 1px / 1px 5px no-repeat #f8f8f4; }
.node svg { margin: 0 2px 0 1px; }
.name { padding: 0 2px; }
.name.on { background: #316ac5; color: #fff; }

.hsplit { flex: none; height: 8px; display: flex; justify-content: center; align-items: center; }
.hsplit .handle { width: 50%; display: flex; align-items: center; gap: 6px; color: #555; border: solid #999; border-width: 0 1px; padding: 0 2px; height: 5px; }
.hsplit i { flex: 1; height: 1px; background: repeating-linear-gradient(90deg, #8d8a7b 0 1px, transparent 1px 3px); }
.yearbar { flex: none; height: 25px; display: flex; align-items: center; padding-left: 4px; }
.grey { color: #a3a196; }
.sort { width: 23px; height: 22px; border: 1px solid #00007a; display: flex; align-items: center; justify-content: center; gap: 1px; background: linear-gradient(#f7a264, #fbc078); margin-left: -3px; }
.az { display: flex; flex-direction: column; font: bold 10px/9px "Liberation Sans", sans-serif; color: #3b5ba8; }
.az span + span { color: #a02c12; }
.down { width: 8px; height: 18px; }
.years { flex: 1; border: 1px solid #777; background: #fff; padding: 2px 0 0 6px; display: grid; grid-template-columns: repeat(3, 58px); grid-auto-rows: 21px; align-items: center; font-family: "Liberation Sans", Arial, sans-serif; font-size: 13px; margin: 0 0 5px; }
.years a { color: #0000c8; text-decoration: underline; text-underline-offset: 2px; }

.vsplit { width: 8px; flex: none; display: flex; align-items: center; justify-content: center; }
.vsplit .handle { height: 50%; width: 6px; display: flex; flex-direction: column; align-items: center; gap: 5px; border: solid #aaa; border-width: 1px 0; padding: 3px 0; }
.vsplit i { flex: 1; width: 1px; background: repeating-linear-gradient(#8d8a7b 0 1px, transparent 1px 3px); }
.tri { border: solid transparent; border-width: 3px 4px 3px 0; border-right-color: #444; }

.right { flex: 1; min-width: 0; display: flex; flex-direction: column; padding-right: 2px; }
.refs { flex: none; border: 2px solid #101018; border-width: 2px 1px 2px 2px; background: #fff; padding: 1px; padding-left: 0; }
.refs-body { display: flex; }
.grid-wrap { flex: 1; min-width: 0; }
table { width: 100%; border-collapse: separate; border-spacing: 0; table-layout: fixed; }
.w-year { width: 60px; }
.w-author { width: 153px; }
.w-title { width: 235px; }
.w-type { width: 134px; }
th { height: 20px; padding: 1px 0 0 9px; text-align: left; font-weight: normal; background: linear-gradient(90deg, #cbc7b8, #cbc7b8) right 3px / 1px 14px no-repeat, linear-gradient(#efecdf 80%, #dad5c1); white-space: nowrap; }
td { height: 17px; padding: 1px 0 0 6px; line-height: 15px; border-bottom: 1px solid #e6e6da; border-right: 1px solid #e6e6da; white-space: nowrap; }
td.first { padding: 0 0 0 5px; }
.yr { display: flex; align-items: center; gap: 3px; line-height: 16px; }
.rec { width: 14px; height: 16px; }
.red td { color: #e0141c; }
.rest td { height: 5px; padding: 0; border-bottom: 0; }
.vbar { width: 17px; flex: none; display: flex; flex-direction: column; align-items: center; background: #f6f6f1; }
.sb { width: 16px; height: 16px; flex: none; display: flex; align-items: center; justify-content: center; border: 1px solid #fff; border-radius: 3px; background: linear-gradient(135deg, #d9e5fe, #b6cbf8); box-shadow: inset 0 0 0 1px #b0c4f0; }
.end { margin-top: auto; }
.thumb { display: flex; align-items: center; justify-content: center; border: 1px solid #9fb6ea; border-radius: 2px; background: #c6d5fd; box-shadow: inset 0 0 0 1px #e0e9ff; }
.tall { width: 15px; height: 160px; margin-top: 1px; }
.tall i { width: 7px; height: 8px; background: repeating-linear-gradient(#8ca6e2 0 1px, #eef3ff 1px 2px); }
.hbar { display: flex; height: 17px; }
.wide { flex: 1; margin: 1px 1px 1px 0; }
.wide i { width: 8px; height: 6px; background: repeating-linear-gradient(90deg, #8ca6e2 0 1px, #eef3ff 1px 2px); }
.corner { width: 17px; background: #ece9d8; }

.tabs { flex: none; height: 21px; display: flex; align-items: flex-end; padding-left: 2px; position: relative; }
.tabs button { height: 19px; padding: 0 5px; border: 1px solid #91a7b4; border-bottom: 0; border-radius: 3px 3px 0 0; background: linear-gradient(#fff, #f1efe4); margin-right: 1px; }
.tabs .t-first { width: 125px; text-align: right; padding-right: 9px; }
.tabs .active { height: 22px; padding: 0 6px; margin: 0 0 -1px -1px; border-top: 3px solid #ffb52e; background: #fff; line-height: 14px; }

.viewer { flex: 1; min-height: 0; display: flex; flex-direction: column; border: 1px solid #919b9c; background: #fcfcfa; padding: 3px 4px 4px 5px; margin-bottom: 3px; }
.banner { flex: none; height: 24px; line-height: 24px; padding-left: 40px; border-radius: 0 5px 0 0; background: linear-gradient(#e6f0fe, #c5dcfc 50%, #84aef0); border-bottom: 1px solid #6d92d0; }
.pdfbar { flex: none; height: 35px; display: flex; background: #ece9d8; border-bottom: 2px solid #a5a296; }
.seg { display: flex; align-items: center; border-right: 1px solid #b0ad9f; padding-right: 1px; }
.s-find { width: 139px; justify-content: flex-end; padding-right: 8px; }
.dots { width: 3px; height: 22px; margin: 0 3px; background: repeating-linear-gradient(#98958a 0 1px, transparent 1px 2px); }
.pt { width: 32px; height: 27px; display: flex; align-items: center; justify-content: center; gap: 4px; }
.narrow { width: 37px; }
.pressed { border: 1px solid #7f9fc8; border-radius: 3px; background: #fff; }
.fit { width: 16px; height: 20px; }
.spellbtn { position: relative; }
.spell { width: 18px; height: 20px; }
.abc { position: absolute; inset: 3px 0 auto; text-align: center; font: bold 7px/10px "Liberation Serif", serif; color: #24487e; }
.zoom { width: 49px; height: 21px; border: 1px solid #7f9db9; background: #fff; padding-left: 6px; }
.zc { margin: 0 3px 0 2px; }

.reader { flex: 1; min-height: 0; display: flex; background: #ece9d8; }
.side { width: 20px; display: flex; flex-direction: column; background: #cac6b4; padding-left: 2px; padding-top: 63px; }
.stab { height: 71px; flex: none; border: 1px solid #77746a; border-top-width: 2px; border-bottom: 5px double #88857a; background: #ece9d8; display: flex; justify-content: center; align-items: flex-end; padding-bottom: 13px; font: 10px/14px "Liberation Sans", Arial, sans-serif; }
.stab.short { height: 58px; padding-bottom: 9px; }
.stab span { writing-mode: vertical-rl; transform: rotate(180deg); }
.sidesplit { width: 6px; display: flex; align-items: center; justify-content: center; background: #f3f1e6; }
.sidesplit i { width: 3px; height: 24px; background: repeating-linear-gradient(#8d8a7b 0 1px, transparent 1px 3px); }
.gutter { width: 8px; background: #b9b6a6; border-left: 1px solid #85826f; border-right: 1px solid #77746a; }
.gutter.thin { width: 7px; background: #c2bfae; border-left: 2px solid #111; border-right: 0; }
.page { flex: 1; min-width: 0; background: #fff; overflow: hidden; padding: 27px 5px 0 0; text-align: center; font: 14px/16px "Liberation Serif", "Times New Roman", serif; }
.page h2 { margin: 0 0 28px; font-size: 22px; line-height: 26px; }
.page p { margin: 0; white-space: nowrap; }
.page .authors { margin-bottom: 18px; font-size: 16px; }
.page .mail { font: 14px/16px "Liberation Mono", monospace; margin-bottom: 36px; }
.abstract { width: 452px; margin: 0 auto; }
.abstract p { text-align: justify; text-align-last: justify; }
mark { background: #ffff00; color: inherit; border-radius: 4px; box-shadow: -2px 0 #ffff00; }
.pv { width: 18px; }
.pop { width: 17px; height: 17px; background: #ece9d8; border-bottom: 1px solid #999; display: flex; align-items: center; justify-content: center; }
.pop b { border: solid transparent; border-width: 5px 0 5px 5px; border-left-color: #000; }
.tiny { width: 15px; height: 8px; margin-top: 1px; }

.pagebar { flex: none; height: 26px; display: flex; align-items: center; background: #ece9d8; border-top: 1px solid #a5a296; }
.nb { width: 32px; height: 22px; display: flex; align-items: center; justify-content: center; flex: none; }
.nb.lead { width: 38px; }
.coll { width: 14px; height: 15px; }
.pager { margin-left: auto; display: flex; align-items: center; border: solid #b0ad9f; border-width: 0 1px; padding: 0 3px; height: 25px; }
.hist { display: flex; align-items: center; border-right: 1px solid #b0ad9f; padding: 0 5px; height: 25px; }
.modes { margin-left: 98px; display: flex; padding-right: 3px; }
.arr { width: 10px; height: 16px; }
.pageno { width: 73px; height: 21px; border: 1px solid #7f9db9; background: #fff; text-align: center; }
.flip { transform: rotate(180deg); }
.m1 { width: 14px; height: 16px; }
.m2 { width: 14px; height: 18px; }
.m3 { width: 16px; height: 12px; }

.status { flex: none; height: 20px; display: flex; justify-content: space-between; padding: 1px 18px 0 4px; border-top: 1px solid #aaa799; border-bottom: 2px solid #cfe6f6; }

.popup { position: absolute; left: 136px; top: 261px; width: 247px; border: 1px solid #0a2c7c; padding: 1px; background: linear-gradient(90deg, #e1ecfd, #a9c6f6 16px, #84a9ec 24px, #f6f6f6 24px); box-shadow: 3px 3px 3px rgba(0, 0, 0, .4); }
.popup button { display: flex; align-items: center; width: 100%; height: 22px; padding-top: 2px; text-align: left; }
.popup button:disabled { color: #a7a6a0; }
.popup .on { border: 1px solid #000060; background: #ffe8b5; }
.popup .ic { width: 33px; padding-left: 3px; }
.popup .on .ic { width: 32px; padding-left: 2px; }
.popup .lb { flex: 1; }
.popup .ky { padding-right: 30px; }
.popup .on .ky { padding-right: 29px; }
.popup hr { height: 1px; border: 0; background: #6a8ccb; margin: 2px 0 3px 31px; }
svg.cross { color: #c01838; }
</style>
